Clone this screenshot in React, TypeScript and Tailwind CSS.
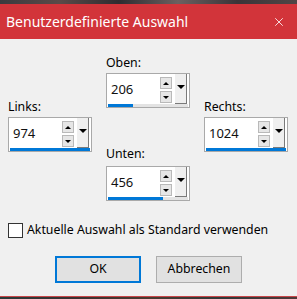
import { X } from "lucide-react";

interface SpinBoxProps {
  value: string;
  fill: number;
}

function Arrow({ up, size = "small" }: { up?: boolean; size?: "small" | "big" }) {
  const w = size === "big" ? 8 : 6;
  const h = size === "big" ? 4 : 3;
  return (
    <svg width={w} height={h} viewBox={`0 0 ${w} ${h}`}>
      {up ? (
        <polygon points={`0,${h} ${w},${h} ${w / 2},0`} fill="#000" />
      ) : (
        <polygon points={`0,0 ${w},0 ${w / 2},${h}`} fill="#000" />
      )}
    </svg>
  );
}

function SpinBox({ value, fill }: SpinBoxProps) {
  return (
    <div className="w-[84px] h-[35px] border border-[#a9a9a9] bg-white flex flex-col">
      <div className="h-[30px] flex">
        <div className="flex-1 flex items-center pl-[4px] pt-[2px] text-[13px] text-[#111]">
          {value}
        </div>
        <div className="w-[12px] ml-[1px] pt-[3px] flex flex-col gap-[2px]">
          <div className="h-[12px] bg-[#e6e6e6] border border-[#b9b9b9] flex items-center justify-center">
            <Arrow up />
          </div>
          <div className="h-[12px] bg-[#e6e6e6] border border-[#b9b9b9] flex items-center justify-center">
            <Arrow />
          </div>
        </div>
        <div className="w-[12px] ml-[3px] mr-[2px] bg-[#efefef] border-r border-b border-[#7a7a7a] flex justify-center pt-[11px]">
          <Arrow size="big" />
        </div>
      </div>
      <div className="h-[3px] mx-[1px] bg-[#e3e3e3]">
        <div className="h-full bg-[#0078d7]" style={{ width: `${fill}%` }} />
      </div>
    </div>
  );
}

export default function App() {
  return (
    <div
      className="w-[297px] h-[299px] flex flex-col overflow-hidden"
      style={{ fontFamily: '"Noto Sans", "Open Sans", sans-serif' }}
    >
      {/* desktop behind */}
      <div className="h-[4px] bg-[linear-gradient(90deg,#3b3a3e,#5a4a48,#2e2c30,#6b6060,#3a3438,#504646)]" />

      {/* title bar */}
      <div className="h-[35px] bg-[#d2343a] flex items-center pl-[6px] pr-[11px] text-white">
        <span className="text-[14px] leading-none">Benutzerdefinierte Auswahl</span>
        <X className="w-[14px] h-[14px] ml-auto" strokeWidth={1.4} />
      </div>

      {/* body */}
      <div className="flex-1 bg-[#f0f0f0] flex flex-col text-[12.3px] text-black">
        <div className="grid grid-cols-[84px_84px_84px] gap-x-[14px] pl-[8px]">
          <div className="pt-[60px]">
            <div className="leading-4">Links:</div>
            <div className="mt-[2px]">
              <SpinBox value="974" fill={100} />
            </div>
          </div>
          <div className="pt-[16px]">
            <div className="leading-4">Oben:</div>
            <div className="mt-[2px]">
              <SpinBox value="206" fill={31} />
            </div>
            <div className="leading-4 mt-[38px]">Unten:</div>
            <div className="mt-[4px]">
              <SpinBox value="456" fill={69} />
            </div>
          </div>
          <div className="pt-[60px]">
            <div className="leading-4">Rechts:</div>
            <div className="mt-[2px]">
              <SpinBox value="1024" fill={100} />
            </div>
          </div>
        </div>

        <div className="mt-[21px] pl-[8px] flex items-center">
          <div className="w-[15px] h-[15px] border border-[#333] bg-white" />
          <span className="ml-[4px] leading-4">Aktuelle Auswahl als Standard verwenden</span>
        </div>

        <div className="mt-[18px] flex justify-center gap-[15px]">
          <button className="w-[86px] h-[27px] bg-[#e1e1e1] border-2 border-[#0078d7] text-[12.3px]">
            OK
          </button>
          <button className="w-[86px] h-[27px] bg-[#e1e1e1] border border-[#adadad] text-[12.3px]">
            Abbrechen
          </button>
        </div>
      </div>

      <div className="h-[1px] bg-[#c8474a]" />
      <div className="h-[2px] bg-[linear-gradient(90deg,#2a3a38,#3a3030,#4a3a30,#303838,#503838)]" />
    </div>
  );
}
